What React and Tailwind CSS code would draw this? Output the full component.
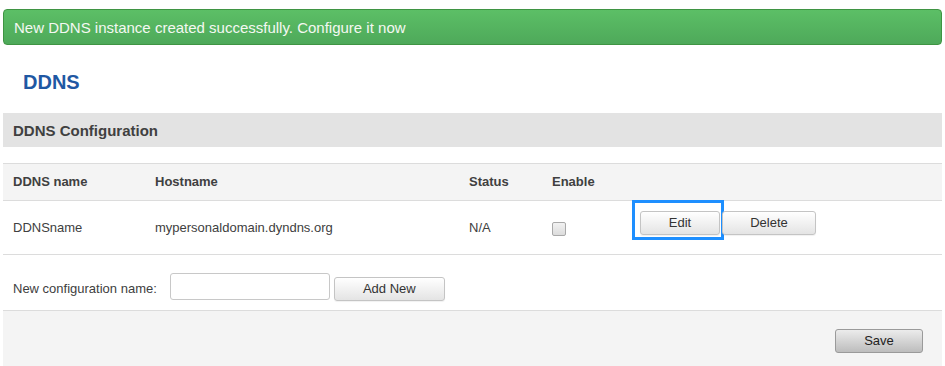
const rows = [
  { name: "DDNSname", host: "mypersonaldomain.dyndns.org", status: "N/A" },
];

const btn =
  "h-[24px] rounded-[3px] border border-[#c4c4c4] bg-gradient-to-b from-[#ffffff] to-[#e4e4e4] text-[13px] text-[#333] shadow-[0_1px_1px_rgba(0,0,0,0.06)]";

export default function App() {
  return (
    <div
      className="w-[945px] h-[366px] overflow-hidden bg-white px-[3px] pt-[9px] text-[#404040]"
      style={{ fontFamily: '"Liberation Sans", Arial, sans-serif' }}
    >
      <div className="flex h-[36px] items-center rounded-[4px] border border-[#3f9443] bg-gradient-to-b from-[#5cbf66] to-[#4ea95a] pl-[10px] pt-[2px] text-[15px] text-[#f4f8f2]">
        New DDNS instance created successfully. Configure it now
      </div>

      <h1 className="mt-[25px] pl-[20px] text-[20px] font-bold leading-[24px] text-[#1f58a3]">
        DDNS
      </h1>

      <div className="mt-[19px] flex h-[34px] items-center bg-[#e3e3e3] pl-[10px] pt-[2px] text-[15px] font-bold text-[#404040]">
        DDNS Configuration
      </div>

      <div className="mt-[16px] border-t border-[#dcdcdc]">
        <div className="grid h-[37px] grid-cols-[142px_314px_83px_1fr] items-center border-b border-[#dcdcdc] bg-[#f4f4f4] pl-[10px] text-[13px] font-bold">
          <div>DDNS name</div>
          <div>Hostname</div>
          <div>Status</div>
          <div>Enable</div>
        </div>
        {rows.map((r) => (
          <div
            key={r.name}
            className="grid h-[54px] grid-cols-[142px_314px_83px_80px_1fr] border-b border-[#dcdcdc] pl-[10px] text-[13px]"
          >
            <div className="self-center">{r.name}</div>
            <div className="self-center">{r.host}</div>
            <div className="self-center">{r.status}</div>
            <div className="self-center pt-[2px]">
              <div className="h-[14px] w-[14px] rounded-[2px] border border-[#a9a9a9] bg-gradient-to-b from-[#f2f2f2] to-[#dcdcdc]" />
            </div>
            <div className="flex items-start">
              <div className="-mt-[1px] h-[40px] border-[3px] border-[#1e8fff] pl-[5px] pr-[1px] pt-[8px]">
                <button className={`${btn} w-[80px]`}>Edit</button>
              </div>
              <button className={`${btn} mt-[10px] -ml-[2px] w-[94px]`}>Delete</button>
            </div>
          </div>
        ))}
      </div>

      <div className="flex h-[56px] items-start border-b border-[#dcdcdc] pl-[10px] pt-[18px] text-[13px]">
        <span className="mt-[6px]">New configuration name:</span>
        <input
          type="text"
          className="ml-[13px] h-[27px] w-[160px] rounded-[3px] border border-[#c8c8c8] bg-white outline-none"
        />
        <button className={`${btn} ml-[4px] mt-[4px] h-[23px] w-[111px]`}>Add New</button>
      </div>

      <div className="flex h-[56px] justify-end bg-[#f4f4f4] pr-[19px] pt-[18px]">
        <button className="h-[24px] w-[88px] rounded-[3px] border border-[#9a9a9a] bg-gradient-to-b from-[#ececec] to-[#bdbdbd] text-[13px] text-[#222]">
          Save
        </button>
      </div>
    </div>
  );
}
